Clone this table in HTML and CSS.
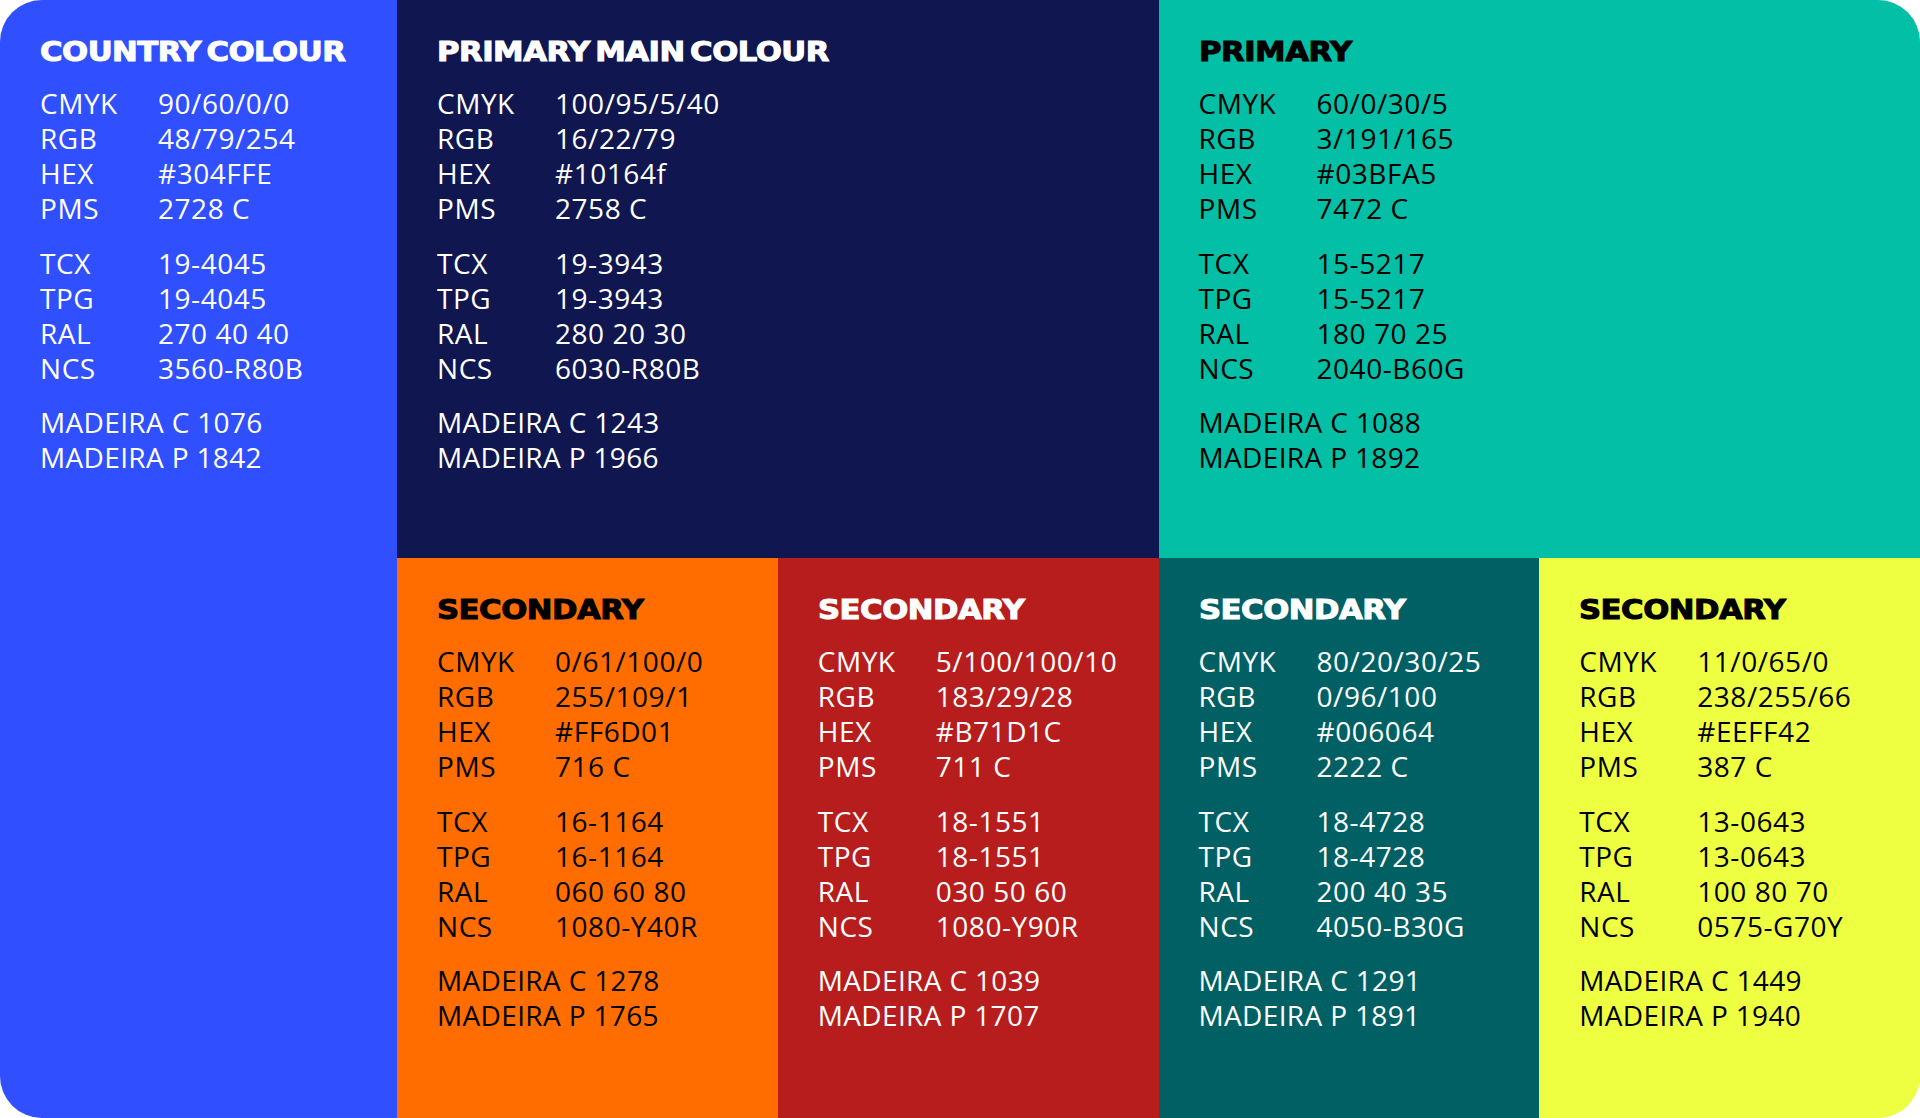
FILE: index.html
```html
<!DOCTYPE html>
<html lang="en">
<head>
<meta charset="utf-8">
<title>Colour palette</title>
<link rel="stylesheet" href="styles.css">
</head>
<body>
<div class="card">
  <section class="panel country light-text">
    <h2 class="title">COUNTRY COLOUR</h2>
    <dl class="specs"><dt>CMYK</dt><dd>90/60/0/0</dd><dt>RGB</dt><dd>48/79/254</dd><dt>HEX</dt><dd>#304FFE</dd><dt>PMS</dt><dd>2728 C</dd></dl>
    <dl class="specs"><dt>TCX</dt><dd>19-4045</dd><dt>TPG</dt><dd>19-4045</dd><dt>RAL</dt><dd>270 40 40</dd><dt>NCS</dt><dd>3560-R80B</dd></dl>
    <div class="thread"><p>MADEIRA C 1076</p><p>MADEIRA P 1842</p></div>
  </section>
  <section class="panel main light-text">
    <h2 class="title">PRIMARY MAIN COLOUR</h2>
    <dl class="specs"><dt>CMYK</dt><dd>100/95/5/40</dd><dt>RGB</dt><dd>16/22/79</dd><dt>HEX</dt><dd>#10164f</dd><dt>PMS</dt><dd>2758 C</dd></dl>
    <dl class="specs"><dt>TCX</dt><dd>19-3943</dd><dt>TPG</dt><dd>19-3943</dd><dt>RAL</dt><dd>280 20 30</dd><dt>NCS</dt><dd>6030-R80B</dd></dl>
    <div class="thread"><p>MADEIRA C 1243</p><p>MADEIRA P 1966</p></div>
  </section>
  <section class="panel primary dark-text">
    <h2 class="title">PRIMARY</h2>
    <dl class="specs"><dt>CMYK</dt><dd>60/0/30/5</dd><dt>RGB</dt><dd>3/191/165</dd><dt>HEX</dt><dd>#03BFA5</dd><dt>PMS</dt><dd>7472 C</dd></dl>
    <dl class="specs"><dt>TCX</dt><dd>15-5217</dd><dt>TPG</dt><dd>15-5217</dd><dt>RAL</dt><dd>180 70 25</dd><dt>NCS</dt><dd>2040-B60G</dd></dl>
    <div class="thread"><p>MADEIRA C 1088</p><p>MADEIRA P 1892</p></div>
  </section>
  <section class="panel orange dark-text">
    <h2 class="title">SECONDARY</h2>
    <dl class="specs"><dt>CMYK</dt><dd>0/61/100/0</dd><dt>RGB</dt><dd>255/109/1</dd><dt>HEX</dt><dd>#FF6D01</dd><dt>PMS</dt><dd>716 C</dd></dl>
    <dl class="specs"><dt>TCX</dt><dd>16-1164</dd><dt>TPG</dt><dd>16-1164</dd><dt>RAL</dt><dd>060 60 80</dd><dt>NCS</dt><dd>1080-Y40R</dd></dl>
    <div class="thread"><p>MADEIRA C 1278</p><p>MADEIRA P 1765</p></div>
  </section>
  <section class="panel red light-text">
    <h2 class="title">SECONDARY</h2>
    <dl class="specs"><dt>CMYK</dt><dd>5/100/100/10</dd><dt>RGB</dt><dd>183/29/28</dd><dt>HEX</dt><dd>#B71D1C</dd><dt>PMS</dt><dd>711 C</dd></dl>
    <dl class="specs"><dt>TCX</dt><dd>18-1551</dd><dt>TPG</dt><dd>18-1551</dd><dt>RAL</dt><dd>030 50 60</dd><dt>NCS</dt><dd>1080-Y90R</dd></dl>
    <div class="thread"><p>MADEIRA C 1039</p><p>MADEIRA P 1707</p></div>
  </section>
  <section class="panel petrol light-text">
    <h2 class="title">SECONDARY</h2>
    <dl class="specs"><dt>CMYK</dt><dd>80/20/30/25</dd><dt>RGB</dt><dd>0/96/100</dd><dt>HEX</dt><dd>#006064</dd><dt>PMS</dt><dd>2222 C</dd></dl>
    <dl class="specs"><dt>TCX</dt><dd>18-4728</dd><dt>TPG</dt><dd>18-4728</dd><dt>RAL</dt><dd>200 40 35</dd><dt>NCS</dt><dd>4050-B30G</dd></dl>
    <div class="thread"><p>MADEIRA C 1291</p><p>MADEIRA P 1891</p></div>
  </section>
  <section class="panel lime dark-text">
    <h2 class="title">SECONDARY</h2>
    <dl class="specs"><dt>CMYK</dt><dd>11/0/65/0</dd><dt>RGB</dt><dd>238/255/66</dd><dt>HEX</dt><dd>#EEFF42</dd><dt>PMS</dt><dd>387 C</dd></dl>
    <dl class="specs"><dt>TCX</dt><dd>13-0643</dd><dt>TPG</dt><dd>13-0643</dd><dt>RAL</dt><dd>100 80 70</dd><dt>NCS</dt><dd>0575-G70Y</dd></dl>
    <div class="thread"><p>MADEIRA C 1449</p><p>MADEIRA P 1940</p></div>
  </section>
</div>
</body>
</html>
```

FILE: styles.css
```css
* { box-sizing: border-box; }
html, body { margin: 0; padding: 0; background: #ffffff; }
body { width: 1920px; height: 1118px; overflow: hidden; }

.card {
  width: 1920px;
  height: 1118px;
  display: grid;
  grid-template-columns: 397px repeat(4, 1fr);
  grid-template-rows: 558px 1fr;
  border-radius: 42px;
  overflow: hidden;
  box-shadow: inset 0 0 0 1px rgba(0, 0, 0, 0.15);
  font-family: "Open Sans", "Noto Sans", sans-serif;
}

.panel {
  padding: 39px 20px 0 40px;
  min-width: 0;
}

.country { grid-column: 1; grid-row: 1 / span 2; background: #304ffe; }
.main    { grid-column: 2 / span 2; grid-row: 1; background: #10164f; }
.primary { grid-column: 4 / span 2; grid-row: 1; background: #03bfa5; }
.orange  { grid-column: 2; grid-row: 2; background: #ff6d01; }
.red     { grid-column: 3; grid-row: 2; background: #b71d1c; }
.petrol  { grid-column: 4; grid-row: 2; background: #006064; }
.lime    { grid-column: 5; grid-row: 2; background: #eeff42; }

.light-text { color: #ffffff; }
.dark-text  { color: #000000; }

.title {
  margin: 0 0 21px 0;
  font-family: "DejaVu Sans", "Liberation Sans", sans-serif;
  font-weight: 700;
  font-size: 26px;
  line-height: 26px;
  word-spacing: -4px;
  letter-spacing: -0.4px;
  -webkit-text-stroke: 1px currentColor;
  transform: scaleX(1.18);
  transform-origin: left center;
  white-space: nowrap;
}

.specs {
  display: grid;
  grid-template-columns: 118px auto;
  margin: 0 0 20px 0;
  font-size: 28px;
  line-height: 35px;
  letter-spacing: 0.55px;
}
.specs + .specs { margin-bottom: 19px; }
.specs dt, .specs dd { margin: 0; white-space: nowrap; }

.thread p {
  margin: 0;
  font-size: 28px;
  line-height: 35px;
  letter-spacing: 0.35px;
  white-space: nowrap;
}
```
